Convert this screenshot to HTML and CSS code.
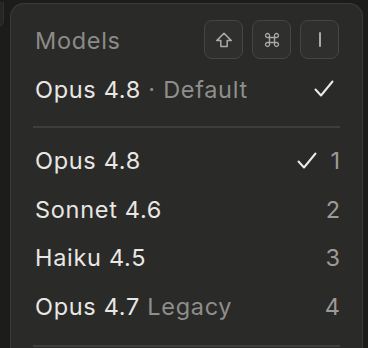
FILE: index.html
```html
<!DOCTYPE html>
<html>
<head>
<meta charset="utf-8">
<link rel="stylesheet" href="styles.css">
</head>
<body>
<div class="backdrop"></div>
<div class="panel">
  <div class="header">
    <span class="title">Models</span>
    <div class="keys">
      <span class="key"><svg width="18" height="16" viewBox="0 0 18 16"><path d="M9 1.2 L16.3 8.6 H12.2 V14.6 H5.8 V8.6 H1.7 Z" fill="none" stroke="#aaa9a6" stroke-width="1.5" stroke-linejoin="round"/></svg></span>
      <span class="key"><svg width="16" height="16" viewBox="0 0 16 16"><path d="M5.5 5.5 V3.6 A2 2 0 1 0 3.6 5.5 H12.4 A2 2 0 1 0 10.5 3.6 V12.4 A2 2 0 1 0 12.4 10.5 H3.6 A2 2 0 1 0 5.5 12.4 Z" fill="none" stroke="#aaa9a6" stroke-width="1.3"/></svg></span>
      <span class="key"><span class="bar"></span></span>
    </div>
  </div>
  <div class="row default-row">
    <span class="name">Opus 4.8<span class="muted"> · Default</span></span>
    <span class="right"><svg class="check" width="20" height="18" viewBox="0 0 20 18"><path d="M1.5 9.5 L7 15.5 L18.5 1.5" fill="none" stroke="#ecebe8" stroke-width="2" stroke-linecap="round" stroke-linejoin="round"/></svg></span>
  </div>
  <div class="divider"></div>
  <div class="list">
    <div class="row">
      <span class="name">Opus 4.8</span>
      <span class="right"><svg class="check" width="20" height="18" viewBox="0 0 20 18"><path d="M1.5 9.5 L7 15.5 L18.5 1.5" fill="none" stroke="#ecebe8" stroke-width="2" stroke-linecap="round" stroke-linejoin="round"/></svg><span class="num">1</span></span>
    </div>
    <div class="row">
      <span class="name">Sonnet 4.6</span>
      <span class="right"><span class="num">2</span></span>
    </div>
    <div class="row">
      <span class="name">Haiku 4.5</span>
      <span class="right"><span class="num">3</span></span>
    </div>
    <div class="row">
      <span class="name">Opus 4.7 <span class="muted">Legacy</span></span>
      <span class="right"><span class="num">4</span></span>
    </div>
  </div>
  <div class="divider bottom"></div>
</div>
</body>
</html>
```

FILE: styles.css
```css
html, body {
  margin: 0;
  padding: 0;
  height: 100%;
  background: #1c1c1b;
  overflow: hidden;
}

body {
  font-family: Inter, "Noto Sans", sans-serif;
  position: relative;
}

.backdrop {
  position: absolute;
  left: -10px;
  top: 2px;
  width: 13px;
  height: 24px;
  background: #262625;
  border-right: 1px solid #2f2f2e;
  border-bottom: 1px solid #2f2f2e;
  border-bottom-right-radius: 6px;
}

.panel {
  position: relative;
  margin: 3px 5px 0 10px;
  height: 360px;
  background: #2a2a29;
  border: 1px solid #3b3b3a;
  border-bottom: none;
  border-radius: 14px 14px 0 0;
  padding: 16px 22px 0 22px;
  box-sizing: border-box;
}

.header {
  display: flex;
  align-items: center;
  justify-content: space-between;
  height: 39px;
  margin-bottom: 6px;
}

.title {
  font-size: 23.5px;
  letter-spacing: 0.7px;
  color: #8c8b88;
  padding-left: 2px;
  margin-top: 2px;
}

.keys {
  display: flex;
  gap: 9px;
  margin-right: 1px;
}

.key {
  width: 39px;
  height: 39px;
  box-sizing: border-box;
  border: 1px solid #454544;
  border-radius: 8px;
  background: #2f2f2e;
  display: flex;
  align-items: center;
  justify-content: center;
}

.bar {
  width: 2px;
  height: 15px;
  background: #aaa9a6;
  border-radius: 1px;
}

.row {
  display: flex;
  align-items: center;
  justify-content: space-between;
  height: 48.5px;
  font-size: 23.5px;
  letter-spacing: 0.7px;
  color: #e9e7e3;
}

.name {
  padding-left: 2px;
}

.muted {
  color: #8f8e8a;
}

.right {
  display: flex;
  align-items: center;
  gap: 11px;
}

.default-row .right {
  margin-right: 6px;
}

.num {
  color: #9c9b98;
  min-width: 12px;
  text-align: right;
  letter-spacing: 0;
}

.divider {
  height: 2px;
  background: #3e3e3d;
  margin: 12px 0 9px 0;
}

.divider.bottom {
  margin-top: 14px;
}
```
